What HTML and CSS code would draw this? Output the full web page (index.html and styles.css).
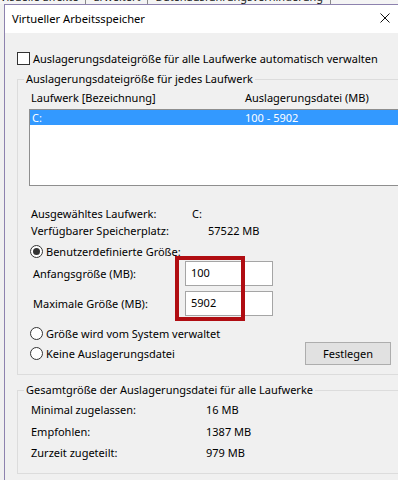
FILE: index.html
```html
<!DOCTYPE html>
<html lang="de">
<head>
<meta charset="utf-8">
<title>Virtueller Arbeitsspeicher</title>
<link rel="stylesheet" href="styles.css">
</head>
<body>
<div class="screen">
  <div class="behind">
    <span class="tab first">Visuelle Effekte</span>
    <span class="tab">Erweitert</span>
    <span class="tab">Datenausführungsverhinderung</span>
  </div>
  <div class="dialog">
    <div class="titlebar">
      <span class="title">Virtueller Arbeitsspeicher</span>
      <svg class="close" width="10" height="10" viewBox="0 0 10 10" aria-hidden="true">
        <path d="M0.5 0.5L9.5 9.5M9.5 0.5L0.5 9.5" stroke="#111" stroke-width="1" fill="none"/>
      </svg>
    </div>
    <div class="content">
      <div class="check-row"><span class="checkbox"></span><span>Auslagerungsdateigröße für alle Laufwerke automatisch verwalten</span></div>

      <fieldset class="group group-drive">
        <legend>Auslagerungsdateigröße für jedes Laufwerk</legend>
        <div class="list-head"><span class="head-col1">Laufwerk [Bezeichnung]</span><span>Auslagerungsdatei (MB)</span></div>
        <div class="listbox">
          <div class="list-row selected"><span class="row-col1">C:</span><span>100 - 5902</span></div>
        </div>

        <div class="info">
          <div class="info-row"><span class="info-label">Ausgewähltes Laufwerk:</span><span>C:</span></div>
          <div class="info-row"><span class="info-label">Verfügbarer Speicherplatz:</span><span class="info-space">57522 MB</span></div>
        </div>

        <div class="radio-row first-radio"><span class="radio on"></span><span>Benutzerdefinierte Größe:</span></div>

        <div class="size-row first-size"><span class="size-label">Anfangsgröße (MB):</span><span class="input">100</span></div>
        <div class="size-row second-size"><span class="size-label">Maximale Größe (MB):</span><span class="input">5902</span></div>

        <div class="radio-row system-radio"><span class="radio"></span><span>Größe wird vom System verwaltet</span></div>
        <div class="bottom-row">
          <div class="radio-row"><span class="radio"></span><span>Keine Auslagerungsdatei</span></div>
          <span class="button">Festlegen</span>
        </div>
      </fieldset>

      <fieldset class="group group-total">
        <legend>Gesamtgröße der Auslagerungsdatei für alle Laufwerke</legend>
        <div class="total-row"><span class="total-label">Minimal zugelassen:</span><span>16 MB</span></div>
        <div class="total-row"><span class="total-label">Empfohlen:</span><span>1387 MB</span></div>
        <div class="total-row"><span class="total-label">Zurzeit zugeteilt:</span><span>979 MB</span></div>
      </fieldset>
    </div>
  </div>
  <div class="annotation"></div>
</div>
</body>
</html>
```

FILE: styles.css
```css
* {
  box-sizing: border-box;
}

html,
body {
  margin: 0;
  padding: 0;
}

body {
  width: 398px;
  height: 480px;
  overflow: hidden;
  background: #f0f0f0;
  font-family: "Noto Sans", "Open Sans", sans-serif;
  font-size: 11px;
  color: #000;
}

.screen {
  position: relative;
  width: 398px;
  height: 480px;
  overflow: hidden;
}

/* window behind the dialog (only its bottom edge is visible) */
.behind {
  height: 4px;
  overflow: hidden;
  display: flex;
  background: #f4f4f4;
  line-height: 14px;
}

.tab {
  margin-top: -10px;
  padding: 0 7px;
  border-right: 1px solid #8a8a8a;
  color: #222;
}

.tab.first {
  padding-left: 0;
}

/* dialog */
.dialog {
  margin-left: 4px;
  width: 420px;
  height: 476px;
  border-top: 1px solid #8d82ae;
  border-left: 1px solid #8d82ae;
  background: #f0f0f0;
}

.titlebar {
  height: 28px;
  background: #fff;
  display: flex;
  align-items: center;
  padding-left: 7px;
}

.title {
  font-size: 11.2px;
  padding-bottom: 2px;
}

.close {
  margin-left: auto;
  margin-right: 34px;
  margin-top: -3px;
}

.content {
  padding: 17px 0 0 12px;
}

.check-row {
  display: flex;
  align-items: center;
  height: 16px;
}

.checkbox {
  width: 13px;
  height: 13px;
  border: 1px solid #333;
  background: #fff;
  margin-right: 3px;
  flex: none;
}

/* group boxes */
.group {
  margin: 5px 0 0 0;
  padding: 3px 8px 9px 11px;
  border: 1px solid #dcdcdc;
  width: 393px;
  min-width: 0;
}

.group legend {
  padding: 0 2px;
  margin-left: -5px;
  line-height: 16px;
}

.list-head {
  display: flex;
  line-height: 16px;
  padding-left: 2px;
}

.head-col1 {
  width: 214px;
}

.listbox {
  margin-top: 3px;
  height: 77px;
  border: 1px solid #8e8e8e;
  background: #fff;
}

.list-row {
  display: flex;
  height: 15px;
  line-height: 15px;
  padding-left: 2px;
}

.row-col1 {
  width: 213px;
}

.selected {
  background: #3399ff;
  color: #fff;
}

.info {
  margin-top: 19px;
}

.info-row {
  display: flex;
  line-height: 17px;
  padding-left: 2px;
}

.info-label {
  width: 161px;
}

.info-space {
  padding-left: 16px;
}

.radio-row {
  display: flex;
  align-items: center;
  height: 16px;
  padding-left: 1px;
}

.first-radio {
  margin-top: 4px;
}

.system-radio {
  margin-top: 9px;
}

.radio {
  width: 13px;
  height: 13px;
  border: 1px solid #333;
  border-radius: 50%;
  background: #fff;
  margin-right: 3px;
  display: flex;
  align-items: center;
  justify-content: center;
  flex: none;
}

.radio.on::after {
  content: "";
  width: 7px;
  height: 7px;
  border-radius: 50%;
  background: #333;
}

.size-row {
  display: flex;
  align-items: center;
  height: 25px;
  padding-left: 4px;
}

.first-size {
  margin-top: 2px;
}

.second-size {
  margin-top: 5px;
}

.size-label {
  width: 152px;
}

.input {
  width: 88px;
  height: 25px;
  border: 1px solid #a5a5a5;
  background: #fff;
  padding-left: 5px;
  line-height: 21px;
}

.bottom-row {
  display: flex;
  align-items: center;
  justify-content: space-between;
  height: 23px;
  margin-top: 1px;
  padding-right: 10px;
}

.button {
  width: 86px;
  height: 23px;
  border: 1px solid #adadad;
  background: #e1e1e1;
  display: flex;
  align-items: center;
  justify-content: center;
}

.group-total {
  margin-top: 7px;
  padding: 1px 8px 9px 11px;
}

.total-row {
  display: flex;
  line-height: 21.5px;
  padding-left: 2px;
}

.total-label {
  width: 175px;
}

/* red highlight drawn over the screenshot */
.annotation {
  position: absolute;
  left: 175px;
  top: 256px;
  width: 70px;
  height: 65px;
  border: 4px solid #b00d12;
}
```
